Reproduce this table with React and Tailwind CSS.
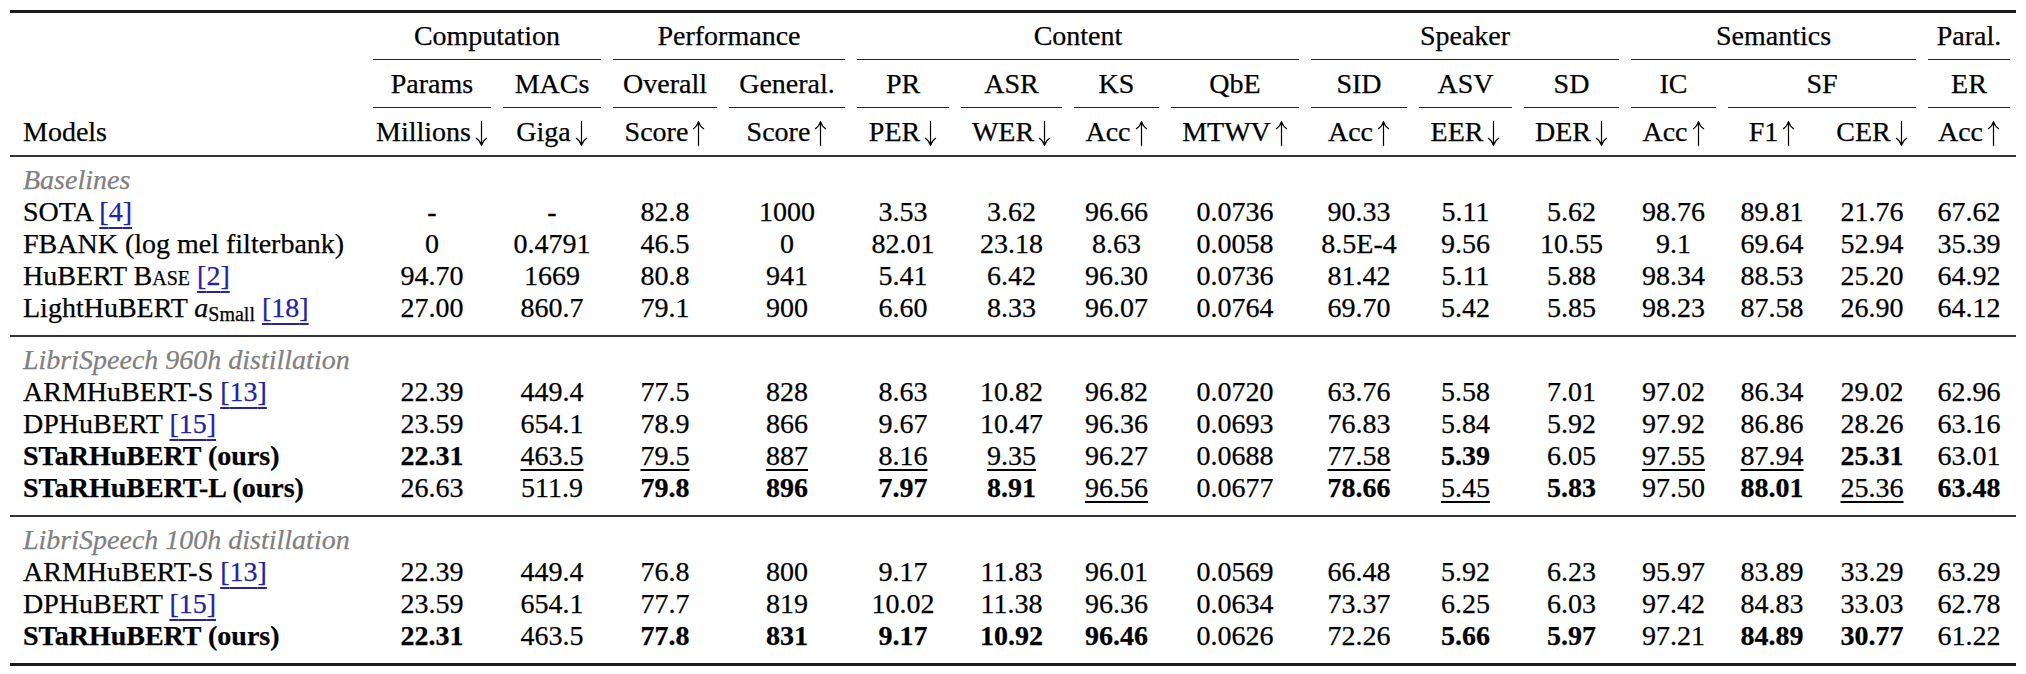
import React from 'react'

const COLS = 'grid grid-cols-[357px_130px_110px_116px_128px_104px_113px_97px_140px_108px_105px_107px_97px_100px_100px_94px]'

const groups = [
  { label: '', span: 'col-span-1', rule: false },
  { label: 'Computation', span: 'col-span-2', rule: true },
  { label: 'Performance', span: 'col-span-2', rule: true },
  { label: 'Content', span: 'col-span-4', rule: true },
  { label: 'Speaker', span: 'col-span-3', rule: true },
  { label: 'Semantics', span: 'col-span-3', rule: true },
  { label: 'Paral.', span: 'col-span-1', rule: true },
]

const tasks = [
  { label: '', span: 'col-span-1', rule: false },
  { label: 'Params', span: 'col-span-1', rule: true },
  { label: 'MACs', span: 'col-span-1', rule: true },
  { label: 'Overall', span: 'col-span-1', rule: true },
  { label: 'General.', span: 'col-span-1', rule: true },
  { label: 'PR', span: 'col-span-1', rule: true },
  { label: 'ASR', span: 'col-span-1', rule: true },
  { label: 'KS', span: 'col-span-1', rule: true },
  { label: 'QbE', span: 'col-span-1', rule: true },
  { label: 'SID', span: 'col-span-1', rule: true },
  { label: 'ASV', span: 'col-span-1', rule: true },
  { label: 'SD', span: 'col-span-1', rule: true },
  { label: 'IC', span: 'col-span-1', rule: true },
  { label: 'SF', span: 'col-span-2', rule: true },
  { label: 'ER', span: 'col-span-1', rule: true },
]

const metrics = [
  ['Millions', 'down'], ['Giga', 'down'], ['Score', 'up'], ['Score', 'up'],
  ['PER', 'down'], ['WER', 'down'], ['Acc', 'up'], ['MTWV', 'up'],
  ['Acc', 'up'], ['EER', 'down'], ['DER', 'down'], ['Acc', 'up'],
  ['F1', 'up'], ['CER', 'down'], ['Acc', 'up'],
]

// thin TeX-style arrow
function Arrow({ dir }) {
  return (
    <svg className="inline-block w-[13px] h-[25px] ml-[4px] align-[-5px]" viewBox="0 0 13 25" fill="none" stroke="#000" strokeWidth="1.2">
      {dir === 'up' ? (
        <>
          <path d="M6.5 1.5V25" />
          <path d="M1 8C3.5 6.5 5.5 4 6.5 0.8C7.5 4 9.5 6.5 12 8" />
        </>
      ) : (
        <>
          <path d="M6.5 0V23.5" />
          <path d="M1 17C3.5 18.5 5.5 21 6.5 24.2C7.5 21 9.5 18.5 12 17" />
        </>
      )}
    </svg>
  )
}

function Cite({ n }) {
  return (
    <span className="text-[#2323a0] underline decoration-[#2323a0] decoration-[1.5px] underline-offset-[6px]">[{n}]</span>
  )
}

const sections = [
  {
    title: 'Baselines',
    rows: [
      { name: <>SOTA <Cite n={4} /></>, v: ['-', '-', '82.8', '1000', '3.53', '3.62', '96.66', '0.0736', '90.33', '5.11', '5.62', '98.76', '89.81', '21.76', '67.62'] },
      { name: <>FBANK (log mel filterbank)</>, v: ['0', '0.4791', '46.5', '0', '82.01', '23.18', '8.63', '0.0058', '8.5E-4', '9.56', '10.55', '9.1', '69.64', '52.94', '35.39'] },
      { name: <>HuBERT <span className="[font-variant-caps:small-caps]">Base</span> <Cite n={2} /></>, v: ['94.70', '1669', '80.8', '941', '5.41', '6.42', '96.30', '0.0736', '81.42', '5.11', '5.88', '98.34', '88.53', '25.20', '64.92'] },
      { name: <>LightHuBERT <i>a</i><span className="text-[20px] align-[-4px]">Small</span> <Cite n={18} /></>, v: ['27.00', '860.7', '79.1', '900', '6.60', '8.33', '96.07', '0.0764', '69.70', '5.42', '5.85', '98.23', '87.58', '26.90', '64.12'] },
    ],
  },
  {
    title: 'LibriSpeech 960h distillation',
    rows: [
      { name: <>ARMHuBERT-S <Cite n={13} /></>, v: ['22.39', '449.4', '77.5', '828', '8.63', '10.82', '96.82', '0.0720', '63.76', '5.58', '7.01', '97.02', '86.34', '29.02', '62.96'] },
      { name: <>DPHuBERT <Cite n={15} /></>, v: ['23.59', '654.1', '78.9', '866', '9.67', '10.47', '96.36', '0.0693', '76.83', '5.84', '5.92', '97.92', '86.86', '28.26', '63.16'] },
      { name: <b>STaRHuBERT (ours)</b>, v: ['**22.31', '_463.5', '_79.5', '_887', '_8.16', '_9.35', '96.27', '0.0688', '_77.58', '**5.39', '6.05', '_97.55', '_87.94', '**25.31', '63.01'] },
      { name: <b>STaRHuBERT-L (ours)</b>, v: ['26.63', '511.9', '**79.8', '**896', '**7.97', '**8.91', '_96.56', '0.0677', '**78.66', '_5.45', '**5.83', '97.50', '**88.01', '_25.36', '**63.48'] },
    ],
  },
  {
    title: 'LibriSpeech 100h distillation',
    rows: [
      { name: <>ARMHuBERT-S <Cite n={13} /></>, v: ['22.39', '449.4', '76.8', '800', '9.17', '11.83', '96.01', '0.0569', '66.48', '5.92', '6.23', '95.97', '83.89', '33.29', '63.29'] },
      { name: <>DPHuBERT <Cite n={15} /></>, v: ['23.59', '654.1', '77.7', '819', '10.02', '11.38', '96.36', '0.0634', '73.37', '6.25', '6.03', '97.42', '84.83', '33.03', '62.78'] },
      { name: <b>STaRHuBERT (ours)</b>, v: ['**22.31', '463.5', '**77.8', '**831', '**9.17', '**10.92', '**96.46', '0.0626', '72.26', '**5.66', '**5.97', '97.21', '**84.89', '**30.77', '61.22'] },
    ],
  },
]

function Val({ v }) {
  if (v.startsWith('**')) return <b>{v.slice(2)}</b>
  if (v.startsWith('_')) return <span className="underline decoration-[1.5px] underline-offset-[4px]">{v.slice(1)}</span>
  return <>{v}</>
}

function HeadRow({ items, h }) {
  return (
    <div className={COLS}>
      {items.map((g, i) => (
        <div key={i} className={`${g.span} flex flex-col`}>
          <div className={`${h} flex items-center justify-center`}>{g.label}</div>
          <div className={g.rule ? 'mx-[6px] h-px bg-[#222]' : 'h-px'} />
        </div>
      ))}
    </div>
  )
}

export default function App() {
  return (
    <div className="w-[2026px] h-[674px] bg-white text-black font-['Liberation_Serif',serif] text-[28px] leading-[32px] [-webkit-text-stroke-width:0.25px] pt-[10px] px-[10px]">
      <div className="h-[3px] bg-[#1a1a1a]" />
      <HeadRow items={groups} h="h-[46px]" />
      <HeadRow items={tasks} h="h-[47px]" />
      <div className={COLS}>
        <div className="h-[47px] flex items-center pl-[13px]">Models</div>
        {metrics.map(([m, d], i) => (
          <div key={i} className="h-[47px] flex items-center justify-center">
            <span>{m}<Arrow dir={d} /></span>
          </div>
        ))}
      </div>
      {sections.map((s, si) => (
        <div key={si}>
          <div className="h-[2px] bg-[#333]" />
          <div className="pt-[7px] pb-[11px]">
            <div className="h-[32px] pl-[13px] italic text-[#808080]">{s.title}</div>
            {s.rows.map((r, ri) => (
              <div key={ri} className={`${COLS} h-[32px]`}>
                <div className="pl-[13px] whitespace-nowrap">{r.name}</div>
                {r.v.map((v, vi) => (
                  <div key={vi} className="text-center">
                    <Val v={v} />
                  </div>
                ))}
              </div>
            ))}
          </div>
        </div>
      ))}
      <div className="h-[3px] bg-[#1a1a1a]" />
    </div>
  )
}
